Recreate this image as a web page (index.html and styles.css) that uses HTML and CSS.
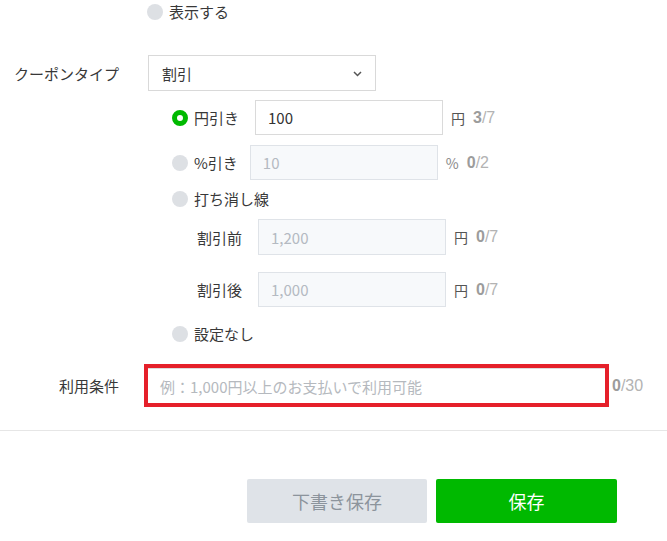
FILE: index.html
```html
<!DOCTYPE html>
<html lang="ja">
<head>
<meta charset="utf-8">
<link rel="stylesheet" href="styles.css">
</head>
<body>
<div class="form">
  <div class="row row-show">
    <div class="label"></div>
    <div class="radio-item"><span class="radio"></span><span class="rtext">表示する</span></div>
  </div>

  <div class="row row-type">
    <div class="label">クーポンタイプ</div>
    <div class="select">
      <span>割引</span>
      <svg class="chev" width="9" height="6" viewBox="0 0 9 6"><path d="M1 1 L4.5 4.5 L8 1" fill="none" stroke="#555" stroke-width="1.5"/></svg>
    </div>
  </div>

  <div class="sub">
    <div class="opt opt-yen">
      <span class="radio on"></span><span class="rtext">円引き</span>
      <div class="input">100</div>
      <span class="unit">円</span><span class="count"><b>3</b>/7</span>
    </div>
    <div class="opt opt-pct">
      <span class="radio"></span><span class="rtext">%引き</span>
      <div class="input disabled">10</div>
      <span class="unit">%</span><span class="count"><b>0</b>/2</span>
    </div>
    <div class="opt opt-strike">
      <span class="radio"></span><span class="rtext">打ち消し線</span>
    </div>
    <div class="opt opt-before">
      <span class="ptext">割引前</span>
      <div class="input disabled">1,200</div>
      <span class="unit">円</span><span class="count"><b>0</b>/7</span>
    </div>
    <div class="opt opt-after">
      <span class="ptext">割引後</span>
      <div class="input disabled">1,000</div>
      <span class="unit">円</span><span class="count"><b>0</b>/7</span>
    </div>
    <div class="opt opt-none">
      <span class="radio"></span><span class="rtext">設定なし</span>
    </div>
  </div>

  <div class="row row-cond">
    <div class="label">利用条件</div>
    <div class="highlight">
      <div class="input wide placeholder">例：1,000円以上のお支払いで利用可能</div>
    </div>
    <span class="count c30"><b>0</b>/30</span>
  </div>
</div>

<div class="divider"></div>

<div class="actions">
  <button class="btn draft">下書き保存</button>
  <button class="btn save">保存</button>
</div>
</body>
</html>
```

FILE: styles.css
```css
* { box-sizing: border-box; }
html, body { margin: 0; padding: 0; background: #fff; }
body {
  font-family: "Noto Sans CJK JP", "Noto Sans", sans-serif;
  font-size: 15px;
  color: #383838;
  width: 667px;
  height: 541px;
  overflow: hidden;
}
.form { display: flex; flex-direction: column; }
.row { display: flex; align-items: center; }
.label {
  width: 148px;
  padding-right: 29px;
  text-align: right;
  flex: none;
  white-space: nowrap;
}
.row-show { margin-top: 1px; height: 22px; }
.row-show .label { width: 147px; }
.radio-item { display: flex; align-items: center; }
.radio {
  width: 16px; height: 16px; border-radius: 50%;
  background: #dde0e4; flex: none;
}
.radio.on { background: #fff; border: 5px solid #00b900; }
.rtext { margin-left: 6px; line-height: 20px; white-space: nowrap; }

.row-type { margin-top: 32px; height: 36px; }
.select {
  width: 228px; height: 36px;
  border: 1px solid #d9d9d9;
  display: flex; align-items: center; justify-content: space-between;
  padding: 0 13px 0 13px;
}
.chev { margin-top: 1px; }

.sub { padding-left: 172px; display: flex; flex-direction: column; }
.opt { display: flex; align-items: center; }
.input {
  height: 35px; width: 188px;
  border: 1px solid #dadada;
  display: flex; align-items: center;
  padding-left: 12px;
  margin-left: 16px;
  color: #333;
  font-size: 15px;
}
.input.disabled { background: #f7f9fb; color: #b4bac2; border-color: #dfe3e8; }
.unit { margin-left: 8px; color: #555; font-size: 14px; }
.opt-pct .unit { color: #888; }
.count {
  margin-left: 8px;
  font-family: "Liberation Sans", Arial, sans-serif;
  font-size: 16px;
  color: #b3b3b3;
}
.count b { color: #9c9c9c; font-weight: bold; }

.opt-yen { margin-top: 9px; height: 35px; }
.opt-pct { margin-top: 10px; height: 35px; }
.opt-pct .input { margin-left: 12px; }
.opt-strike { margin-top: 8px; height: 22px; }
.opt-before { margin-top: 9px; height: 36px; padding-left: 25px; }
.opt-before .input { height: 36px; }
.opt-after { margin-top: 17px; height: 35px; padding-left: 25px; }
.opt-none { margin-top: 16px; height: 22px; }

.row-cond { margin-top: 19px; height: 43px; }
.row-cond .label { width: 144px; padding-right: 25px; }
.highlight {
  border: 4px solid #e5202a;
  width: 465px; height: 43px;
}
.input.wide {
  width: 100%; height: 100%;
  margin-left: 0;
  border: 1px solid #dcdcdc;
  border-left: none; border-right: none; border-bottom: none;
  padding-left: 12px;
}
.placeholder { color: #b5b9be; }
.c30 { margin-left: 3px; font-size: 16px; }

.divider { margin-top: 23px; height: 1px; background: #e6e6e6; }

.actions { display: flex; gap: 9px; padding-left: 247px; margin-top: 48px; }
.btn {
  width: 180px; height: 44px;
  border: none; border-radius: 2px;
  font-family: "Noto Sans CJK JP", sans-serif;
  font-size: 18px;
}
.draft { background: #dfe3e8; color: #8c949c; }
.save { background: #00b900; color: #fff; width: 181px; }
```
